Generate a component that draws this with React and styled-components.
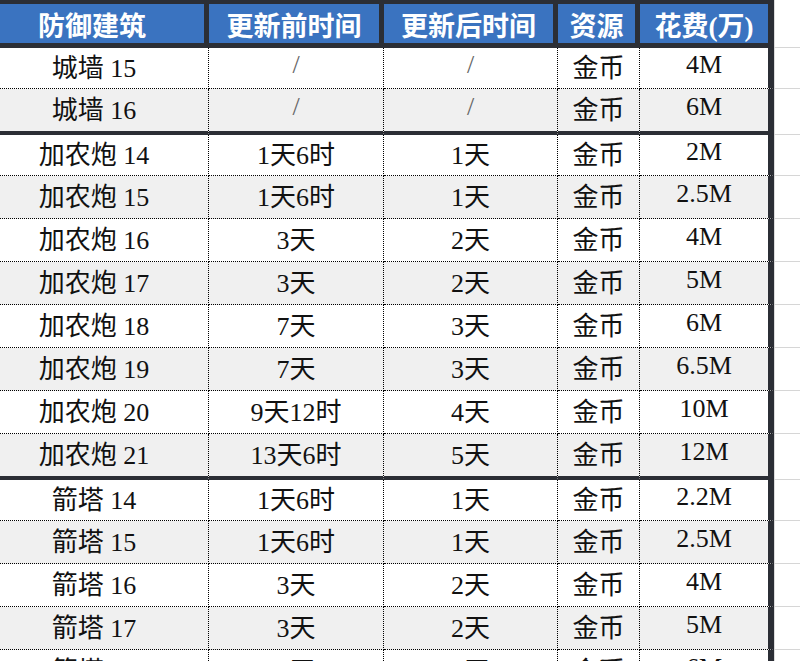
import React from "react";
import styled, { createGlobalStyle } from "styled-components";

const GlobalStyle = createGlobalStyle`
  html, body {
    margin: 0;
    padding: 0;
    background: #fff;
  }
  body {
    width: 800px;
    height: 661px;
    overflow: hidden;
    font-family: "Liberation Serif", "Noto Sans CJK SC", serif;
  }
`;

const DARK = "#2b2e35";
const BLUE = "#3a73c0";

// column widths, first column runs off the left edge of the shot
const COLS = [229, 175, 174, 82, 134, 26];

const HEADERS = ["防御建筑", "更新前时间", "更新后时间", "资源", "花费(万)"];

const GROUPS = [
  [
    ["城墙 15", "/", "/", "金币", "4M"],
    ["城墙 16", "/", "/", "金币", "6M"],
  ],
  [
    ["加农炮 14", "1天6时", "1天", "金币", "2M"],
    ["加农炮 15", "1天6时", "1天", "金币", "2.5M"],
    ["加农炮 16", "3天", "2天", "金币", "4M"],
    ["加农炮 17", "3天", "2天", "金币", "5M"],
    ["加农炮 18", "7天", "3天", "金币", "6M"],
    ["加农炮 19", "7天", "3天", "金币", "6.5M"],
    ["加农炮 20", "9天12时", "4天", "金币", "10M"],
    ["加农炮 21", "13天6时", "5天", "金币", "12M"],
  ],
  [
    ["箭塔 14", "1天6时", "1天", "金币", "2.2M"],
    ["箭塔 15", "1天6时", "1天", "金币", "2.5M"],
    ["箭塔 16", "3天", "2天", "金币", "4M"],
    ["箭塔 17", "3天", "2天", "金币", "5M"],
    ["箭塔 18", "7天", "3天", "金币", "6M"],
  ],
];

const App = () => {
  return (
    <Sheet>
      <GlobalStyle />
      <Table>
        <colgroup>
          {COLS.map((w, i) => (
            <col key={i} style={{ width: w }} />
          ))}
        </colgroup>
        <thead>
          <tr>
            {HEADERS.map((h, i) => (
              <HeadCell key={h} $edge={i === HEADERS.length - 1}>
                <HeadInner>{h}</HeadInner>
              </HeadCell>
            ))}
            <Margin />
          </tr>
        </thead>
        <tbody>
          {GROUPS.map((group, g) =>
            group.map((row, idx) => {
              const last = idx === group.length - 1 && g < GROUPS.length - 1;
              return (
                <tr key={row[0]}>
                  {row.map((text, c) => (
                    <Cell
                      key={c}
                      $stripe={idx % 2 === 1}
                      $last={last}
                      $edge={c === row.length - 1}
                    >
                      <CellInner $first={idx === 0} $muted={text === "/"}>
                        {text}
                      </CellInner>
                    </Cell>
                  ))}
                  <Margin />
                </tr>
              );
            })
          )}
        </tbody>
      </Table>
    </Sheet>
  );
};

export default App;

const Sheet = styled.div`
  width: 800px;
  height: 661px;
  overflow: hidden;
  position: relative;
`;

const Table = styled.table`
  width: 820px;
  margin-left: -20px;
  table-layout: fixed;
  border-collapse: separate;
  border-spacing: 0;
`;

const HeadCell = styled.th`
  padding: 0;
  background: ${BLUE};
  border-top: 4px solid ${DARK};
  border-bottom: 5px solid ${DARK};
  border-right: ${(p) => (p.$edge ? "6px" : "5px")} solid ${DARK};
`;

const HeadInner = styled.div`
  height: 39px;
  display: flex;
  align-items: center;
  justify-content: center;
  padding-top: 1px;
  box-sizing: border-box;
  color: #fff;
  font-size: 27px;
  font-weight: 700;
  white-space: nowrap;
`;

const Cell = styled.td`
  padding: 0;
  background: ${(p) => (p.$stripe ? "#f0f0f0" : "#fff")};
  border-right: ${(p) =>
    p.$edge ? `6px solid ${DARK}` : "1px dotted #000"};
  border-bottom: ${(p) =>
    p.$last ? `4px solid ${DARK}` : "1px dotted #000"};
`;

const CellInner = styled.div`
  height: ${(p) => (p.$first ? "40px" : "42px")};
  box-sizing: border-box;
  padding-bottom: 6px;
  display: flex;
  align-items: center;
  justify-content: center;
  color: ${(p) => (p.$muted ? "#666" : "#111")};
  font-size: 26px;
  white-space: nowrap;
`;

const Margin = styled.td`
  padding: 0;
  background: #fff;
  border-bottom: 1px solid #d6d6d6;
  box-shadow: inset 1px 0 0 #dcdcdc;
`;
